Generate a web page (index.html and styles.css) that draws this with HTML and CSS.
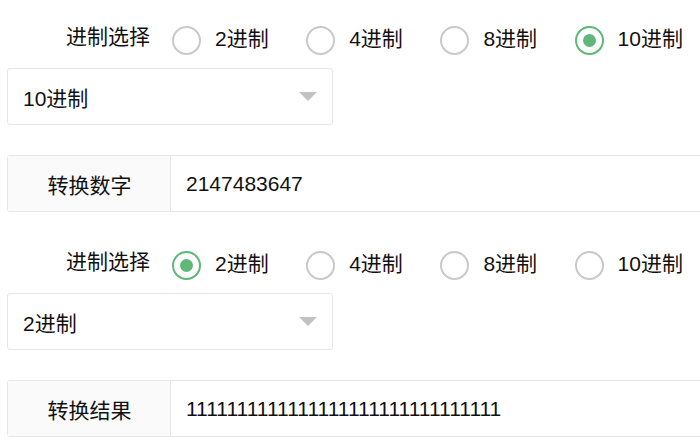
FILE: index.html
```html
<!DOCTYPE html>
<html lang="zh-CN">
<head>
<meta charset="utf-8">
<title>进制转换</title>
<link rel="stylesheet" href="styles.css">
</head>
<body>
<div class="page">
  <section class="block">
    <div class="radio-row">
      <div class="row-label">进制选择</div>
      <div class="radios">
        <div class="radio"><svg class="radio-icon" viewBox="0 0 29 29"><circle cx="14.5" cy="14.5" r="13.5" fill="none" stroke="#c9c9c9" stroke-width="2"/></svg><span>2进制</span></div>
        <div class="radio"><svg class="radio-icon" viewBox="0 0 29 29"><circle cx="14.5" cy="14.5" r="13.5" fill="none" stroke="#c9c9c9" stroke-width="2"/></svg><span>4进制</span></div>
        <div class="radio"><svg class="radio-icon" viewBox="0 0 29 29"><circle cx="14.5" cy="14.5" r="13.5" fill="none" stroke="#c9c9c9" stroke-width="2"/></svg><span>8进制</span></div>
        <div class="radio"><svg class="radio-icon" viewBox="0 0 29 29"><circle cx="14.5" cy="14.5" r="13.5" fill="none" stroke="#5FB878" stroke-width="2"/><circle cx="14.5" cy="14.5" r="6.5" fill="#5FB878"/></svg><span>10进制</span></div>
      </div>
    </div>
    <div class="select"><span>10进制</span><i class="edge"></i></div>
    <div class="pane">
      <div class="pane-label">转换数字</div>
      <div class="pane-input">2147483647</div>
    </div>
  </section>
  <section class="block block-second">
    <div class="radio-row">
      <div class="row-label">进制选择</div>
      <div class="radios">
        <div class="radio"><svg class="radio-icon" viewBox="0 0 29 29"><circle cx="14.5" cy="14.5" r="13.5" fill="none" stroke="#5FB878" stroke-width="2"/><circle cx="14.5" cy="14.5" r="6.5" fill="#5FB878"/></svg><span>2进制</span></div>
        <div class="radio"><svg class="radio-icon" viewBox="0 0 29 29"><circle cx="14.5" cy="14.5" r="13.5" fill="none" stroke="#c9c9c9" stroke-width="2"/></svg><span>4进制</span></div>
        <div class="radio"><svg class="radio-icon" viewBox="0 0 29 29"><circle cx="14.5" cy="14.5" r="13.5" fill="none" stroke="#c9c9c9" stroke-width="2"/></svg><span>8进制</span></div>
        <div class="radio"><svg class="radio-icon" viewBox="0 0 29 29"><circle cx="14.5" cy="14.5" r="13.5" fill="none" stroke="#c9c9c9" stroke-width="2"/></svg><span>10进制</span></div>
      </div>
    </div>
    <div class="select"><span>2进制</span><i class="edge"></i></div>
    <div class="pane">
      <div class="pane-label">转换结果</div>
      <div class="pane-input result">1111111111111111111111111111111</div>
    </div>
  </section>
</div>
</body>
</html>
```

FILE: styles.css
```css
html, body {
  margin: 0;
  padding: 0;
  overflow: hidden;
  background: #fff;
}
body {
  font-family: "Liberation Sans", "Noto Sans CJK SC", sans-serif;
  font-size: 21px;
  color: #111;
}
.page {
  padding: 9px 0 0 7px;
}
.block-second {
  margin-top: 22px;
}
.radio-row {
  display: flex;
  align-items: flex-start;
  height: 59px;
}
.row-label {
  width: 143px;
  text-align: right;
  padding-top: 13px;
  line-height: 30px;
}
.radios {
  display: flex;
  margin-left: 22px;
  gap: 37.5px;
  margin-top: 10px;
}
.radio {
  display: flex;
  align-items: center;
  height: 42px;
  line-height: 42px;
  white-space: nowrap;
}
.radio-icon {
  width: 29px;
  height: 29px;
  margin-right: 14px;
  flex: none;
}
.radio span {
  position: relative;
  top: -1px;
}
.select {
  position: relative;
  box-sizing: border-box;
  width: 326px;
  height: 57px;
  border: 1px solid #e6e6e6;
  border-radius: 3px;
  padding-left: 15px;
  display: flex;
  align-items: center;
}
.edge {
  position: absolute;
  right: 15px;
  top: 50%;
  margin-top: -5px;
  width: 0;
  height: 0;
  border-left: 9px solid transparent;
  border-right: 9px solid transparent;
  border-top: 9px solid #c2c2c2;
}
.pane {
  display: flex;
  box-sizing: border-box;
  width: 740px;
  height: 57px;
  margin-top: 30px;
  border: 1px solid #e6e6e6;
  border-radius: 3px;
}
.pane-label {
  box-sizing: border-box;
  width: 163px;
  flex: none;
  background: #fafafa;
  border-right: 1px solid #e6e6e6;
  display: flex;
  align-items: center;
  justify-content: center;
  padding-left: 1px;
}
.pane-input {
  flex: 1;
  display: flex;
  align-items: center;
  padding-left: 15px;
  background: #fff;
}
.result {
  letter-spacing: 0;
}
```
